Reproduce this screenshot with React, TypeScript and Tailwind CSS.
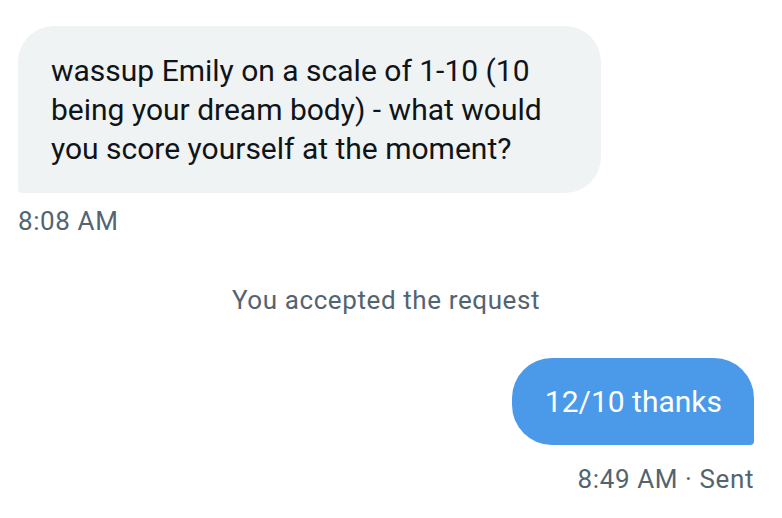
export default function App() {
  return (
    <div className="w-[782px] h-[518px] bg-white overflow-hidden font-['Roboto','Liberation_Sans',sans-serif]">
      <div className="flex flex-col pl-[18px] pr-[28px] pt-[26px]">
        {/* received */}
        <div className="flex flex-col items-start">
          <div className="w-[583px] bg-[#eff3f4] rounded-[36px] rounded-bl-[4px] pl-[33px] pr-8 py-[25px] text-[30px] leading-[39px] text-[#0f1419]">
            wassup Emily on a scale of 1-10 (10
            <br />
            being your dream body) - what would
            <br />
            you score yourself at the moment?
          </div>
          <div className="mt-[13px] text-[26px] leading-[30px] tracking-[0.6px] text-[#536471]">8:08 AM</div>
        </div>

        <div className="mt-[49px] text-center text-[26px] leading-[30px] tracking-[0.6px] text-[#536471]">
          You accepted the request
        </div>

        {/* sent */}
        <div className="flex flex-col items-end mt-[43px]">
          <div className="h-[87px] bg-[#4a9ae9] rounded-[40px] rounded-br-[4px] pl-[33px] pr-8 flex items-center text-[30px] text-white">
            12/10 thanks
          </div>
          <div className="mt-[19px] text-[26px] leading-[30px] tracking-[0.6px] text-[#536471]">8:49 AM · Sent</div>
        </div>
      </div>
    </div>
  );
}
